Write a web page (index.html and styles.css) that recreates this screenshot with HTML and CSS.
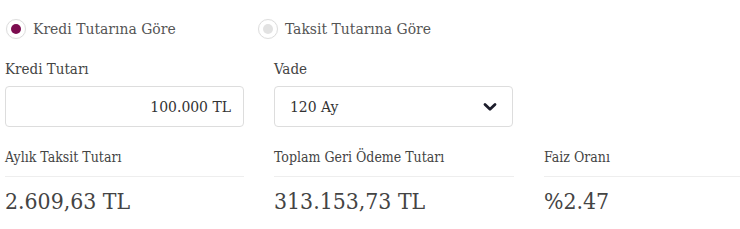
FILE: index.html
```html
<!DOCTYPE html>
<html lang="tr">
<head>
<meta charset="utf-8">
<link rel="stylesheet" href="styles.css">
</head>
<body>
<div class="calc">
  <div class="radios">
    <label class="radio checked"><span class="dot"></span><span class="rlabel">Kredi Tutarına Göre</span></label>
    <label class="radio"><span class="dot"></span><span class="rlabel">Taksit Tutarına Göre</span></label>
  </div>
  <div class="fields">
    <div class="field">
      <div class="flabel">Kredi Tutarı</div>
      <div class="box amount">100.000 TL</div>
    </div>
    <div class="field">
      <div class="flabel">Vade</div>
      <div class="box select"><span>120 Ay</span>
        <svg class="chev" width="14" height="10" viewBox="0 0 14 10"><path d="M2 2.5 L7 7.2 L12 2.5" fill="none" stroke="#1c1d2b" stroke-width="2.8" stroke-linecap="round" stroke-linejoin="round"/></svg>
      </div>
    </div>
  </div>
  <div class="results">
    <div class="res"><div class="rtitle">Aylık Taksit Tutarı</div><div class="rval">2.609,63 TL</div></div>
    <div class="res"><div class="rtitle">Toplam Geri Ödeme Tutarı</div><div class="rval">313.153,73 TL</div></div>
    <div class="res"><div class="rtitle">Faiz Oranı</div><div class="rval">%2.47</div></div>
  </div>
</div>
</body>
</html>
```
FILE: styles.css
```css
html, body { margin: 0; padding: 0; background: #fff; }
body { font-family: "DejaVu Serif", "Liberation Serif", serif; font-stretch: condensed; color: #444; overflow: hidden; }
.calc { padding: 0 0 0 5px; }
.radios { display: flex; padding-top: 17px; height: 41px; box-sizing: border-box; }
.radio { display: flex; align-items: center; gap: 7px; width: 252px; font-size: 15.5px; color: #555; }
.dot { width: 18px; height: 18px; border: 1px solid #ddd; border-radius: 50%; display: flex; align-items: center; justify-content: center; margin-left: 1px; box-shadow: 0 0 1px #eee; }
.dot::after { content: ""; width: 10px; height: 10px; border-radius: 50%; background: #e2e2e2; }
.radio.checked .dot::after { background: #7c0c4f; }
.fields { display: flex; gap: 30px; padding-top: 19px; }
.field { width: 239px; }
.flabel { font-size: 15px; color: #444; height: 26px; line-height: 18px; }
.box { height: 41px; border: 1px solid #ddd; border-radius: 4px; box-sizing: border-box; font-size: 15.5px; color: #333; display: flex; align-items: center; }
.amount { justify-content: flex-end; padding-right: 12px; }
.select { justify-content: space-between; padding: 0 15px 0 15px; }
.chev { margin-top: 1px; }
.results { display: grid; grid-template-columns: 239px 240px 196px; gap: 30px; padding-top: 22px; }
.rtitle { font-size: 14px; color: #444; padding-bottom: 10px; border-bottom: 1px solid #eee; line-height: 17px; }
.rval { font-size: 22.8px; color: #444; padding-top: 10px; line-height: 28px; }
```
